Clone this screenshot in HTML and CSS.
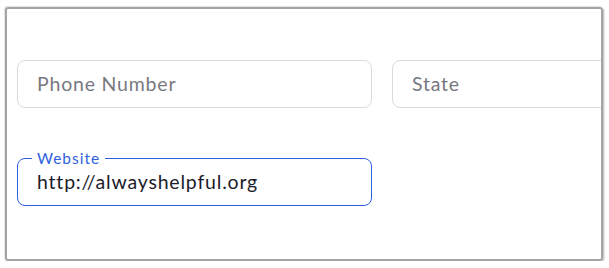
FILE: index.html
```html
<!DOCTYPE html>
<html>
<head>
<meta charset="utf-8">
<link rel="stylesheet" href="styles.css">
</head>
<body>
<div class="frame">
  <div class="grid">
    <div class="field"><span class="placeholder">Phone Number</span></div>
    <div class="field"><span class="placeholder">State</span></div>
    <div class="field focused">
      <span class="legend">Website</span>
      <span class="value">http://alwayshelpful.org</span>
    </div>
  </div>
</div>
</body>
</html>
```
FILE: styles.css
```css
html, body {
  margin: 0;
  padding: 0;
  background: #ffffff;
}
body {
  font-family: "Lato", "Liberation Sans", sans-serif;
}
.frame {
  box-sizing: border-box;
  margin: 7px 0 0 5px;
  width: 598px;
  height: 254px;
  border: 2px solid #a4a4a4;
  border-radius: 3px;
  box-shadow: 1px 1px 2px rgba(0,0,0,0.3), -1px -1px 1px rgba(0,0,0,0.1);
  overflow: hidden;
  padding: 51px 0 0 10px;
}
.grid {
  display: grid;
  grid-template-columns: 355px 355px;
  column-gap: 20px;
  row-gap: 50px;
}
.field {
  position: relative;
  box-sizing: border-box;
  height: 48px;
  border: 1px solid #dadada;
  border-radius: 8px;
  display: flex;
  align-items: center;
  padding: 0 19px 2px;
  font-size: 19.5px;
  letter-spacing: 0.8px;
}
.placeholder {
  color: #787882;
}
.focused {
  border-color: #2f5fe0;
}
.legend {
  position: absolute;
  left: 14px;
  top: -11px;
  padding: 0 5px;
  background: #ffffff;
  color: #2f5fe0;
  font-size: 15.5px;
  letter-spacing: 1px;
  line-height: 20px;
}
.value {
  color: #1c1c2a;
}
```
